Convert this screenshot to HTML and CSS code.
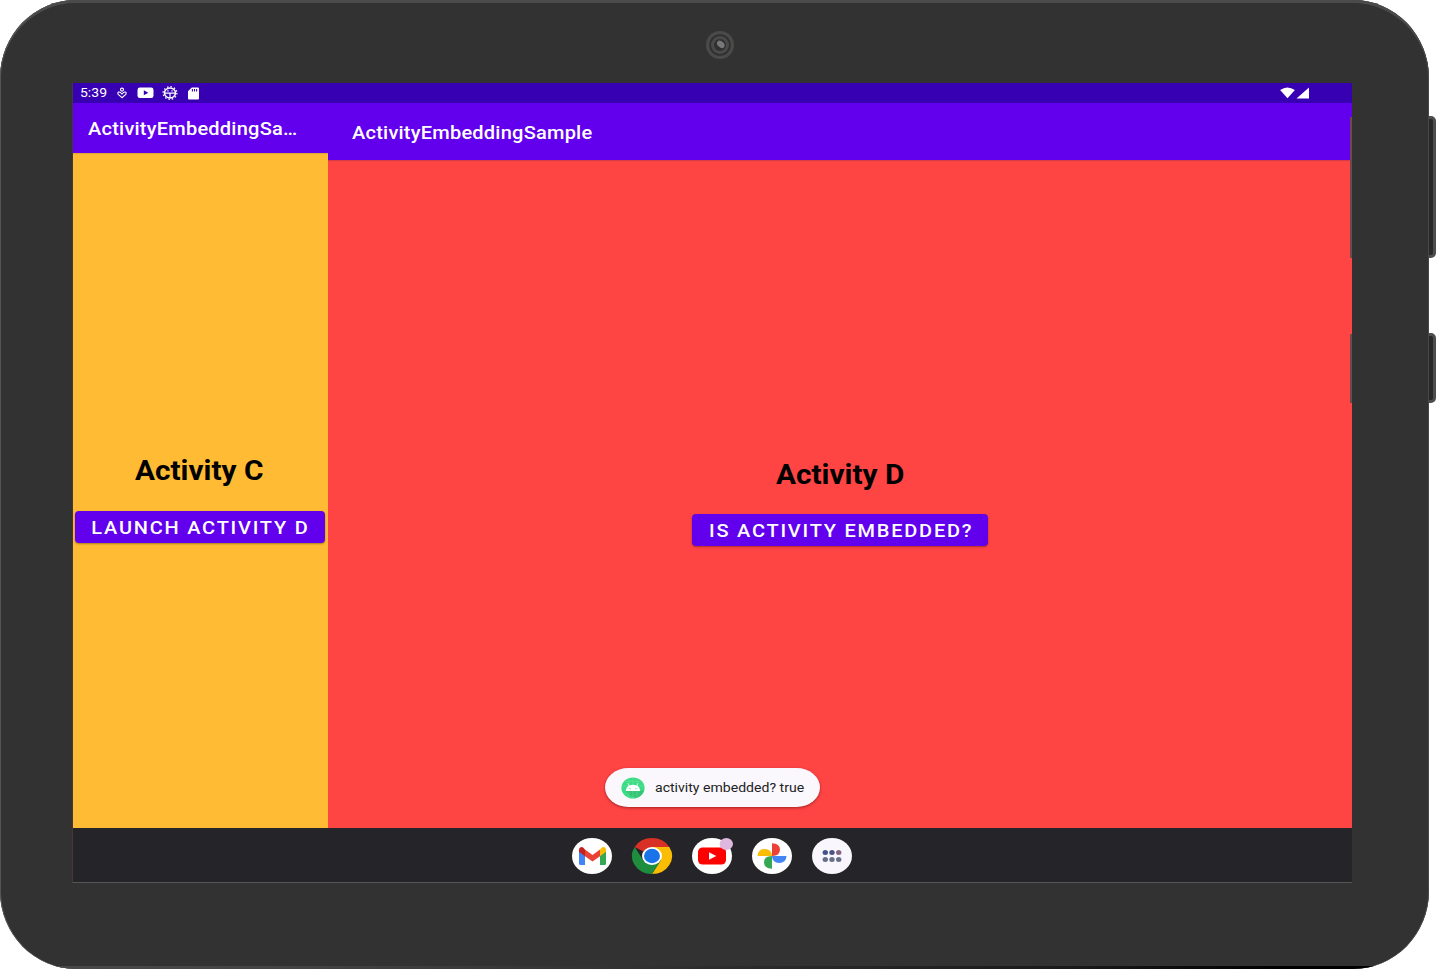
FILE: index.html
```
<!DOCTYPE html>
<html lang="en">
<head>
<meta charset="utf-8">
<title>ActivityEmbeddingSample</title>
<link rel="stylesheet" href="styles.css">
</head>
<body>
<div class="stage">
  <div class="key key-volume"></div>
  <div class="key key-power"></div>
  <div class="device">
    <header class="bezel-top">
      <svg class="camera" width="28" height="28" viewBox="0 0 28 28"><circle cx="14" cy="14" r="14" fill="#4a4a4a"/><circle cx="14" cy="14" r="10.800" fill="#303030"/><circle cx="14" cy="14" r="9" fill="#4a4a4a"/><circle cx="14" cy="14" r="6" fill="#303030"/><ellipse cx="14.800" cy="13.300" rx="4.300" ry="3" transform="rotate(42 14.800 13.300)" fill="#77777b"/></svg>
    </header>
    <main class="screen">
      <div class="status">
        <span class="clock">5:39</span>
        <svg class="s-heart" width="10" height="12" viewBox="0 0 10 12" fill="none" stroke="#fff" stroke-width="1.100"><circle cx="5" cy="2.600" r="1.500"/><path d="M5 10.700 1.200 7.300Q.3 5.800 1.600 5.100 3 4.500 5 7 7 4.500 8.400 5.100 9.700 5.800 8.800 7.300Z"/></svg>
        <svg class="s-tube" width="17" height="12" viewBox="0 0 17 12"><rect x=".5" y=".5" width="16" height="10.600" rx="2.400" fill="#fff"/><path d="M6.800 3.200v5l4.500-2.500z" fill="#3700b3"/></svg>
        <svg class="s-gear" width="16" height="14" viewBox="0 0 16 14" fill="none" stroke="#fff"><ellipse cx="8" cy="7" rx="6.900" ry="6.300" stroke-width="1.300" stroke-dasharray="1.450 2.010"/><ellipse cx="8" cy="7" rx="5.500" ry="4.900" stroke-width="1.500"/><path d="M3 7.100h10M8 7v5M5.300 4.900h1.300M9.400 4.900h1.300" stroke-width="1.200"/></svg>
        <svg class="s-card" width="11" height="13" viewBox="0 0 11 13"><path d="M3.800.5H10q1 0 1 1v10q0 1-1 1H1q-1 0-1-1V4.200z" fill="#fff"/><path d="M4.400 2v2.400M6.500 2v2.400M8.600 2v2.400" stroke="#3700b3" stroke-width="1.100"/></svg>
        <svg class="s-net" width="30" height="12" viewBox="0 0 30 12" fill="#fff"><path d="M.1 3.100Q7.300-2.200 14.900 3.100L7.500 11.300z"/><path d="M29 .4V11.600H16.500z"/></svg>
      </div>
      <div class="panes">
        <section class="pane pane-c">
          <div class="appbar"><span class="title title-c">ActivityEmbeddingSa…</span></div>
          <div class="body">
            <h1 class="heading">Activity C</h1>
            <button class="btn btn-c"><span class="btn-text">LAUNCH ACTIVITY D</span></button>
          </div>
        </section>
        <section class="pane pane-d">
          <div class="appbar"><span class="title title-d">ActivityEmbeddingSample</span></div>
          <div class="body">
            <h1 class="heading">Activity D</h1>
            <button class="btn btn-d"><span class="btn-text">IS ACTIVITY EMBEDDED?</span></button>
          </div>
        </section>
      </div>
      <nav class="taskbar">
        <svg class="app" viewBox="0 0 40 36"><ellipse cx="20" cy="18" rx="20" ry="18" fill="#fff"/><path d="M7 12v13.500q0 1.500 1.500 1.500H13V15.500z" fill="#4285f4"/><path d="M34 12v13.500q0 1.500-1.500 1.500H28V15.500z" fill="#34a853"/><path d="M13 11.500l7.500 5.500 7.500-5.500v6.800L20.500 23.500 13 18.300z" fill="#ea4335"/><path d="M7 12Q7 9 10 9q1.300 0 3 2.500v6.800L7 13.700z" fill="#c5221f"/><path d="M34 12Q34 9 31 9q-1.300 0-3 2.500v6.800l6-4.600z" fill="#fbbc04"/></svg>
        <svg class="app" viewBox="0 0 40 36"><g transform="scale(1.1111 1)"><path d="M18 18 2.410 9A18 18 0 0 1 33.590 9H18z" fill="#d93025"/><path d="M18 9H33.590A18 18 0 0 1 18 36l7.800-13.500z" fill="#fbbc04"/><path d="M2.410 9A18 18 0 0 0 18 36l7.800-13.500L18 18l-7.800 4.500z" fill="#1e8e3e"/><circle cx="18" cy="18" r="9" fill="#fff"/><circle cx="18" cy="18" r="7.200" fill="#1a73e8"/></g></svg>
        <svg class="app" viewBox="0 0 40 36"><ellipse cx="20" cy="18" rx="20" ry="18" fill="#fff"/><rect x="6" y="9.500" width="28" height="17" rx="4.500" fill="#f00"/><path d="M17 14.300v7.400l7.300-3.700z" fill="#fff"/><ellipse cx="34.300" cy="6" rx="6.700" ry="6" fill="#dfb8df"/></svg>
        <svg class="app" viewBox="0 0 40 36"><ellipse cx="20" cy="18" rx="20" ry="18" fill="#fff"/><path d="M20 18V5.300q8 .3 8 6.500T20 18z" fill="#ea4335"/><path d="M20 18H34.500q-.4 7-7.300 7T20 18z" fill="#4285f4"/><path d="M20 18v12.700q-8-.3-8-6.500T20 18z" fill="#34a853"/><path d="M20 18H5.500q.4-7 7.300-7T20 18z" fill="#fbbc04"/></svg>
        <svg class="app" viewBox="0 0 40 36"><ellipse cx="20" cy="18" rx="20" ry="18" fill="#f9f7fd"/><g fill="#676f88"><ellipse cx="13.300" cy="14.500" rx="2.700" ry="2.500" fill="#425488"/><ellipse cx="20" cy="14.500" rx="2.700" ry="2.500" fill="#4b5384"/><ellipse cx="26.700" cy="14.500" rx="2.700" ry="2.500" fill="#866383"/><ellipse cx="13.300" cy="21.600" rx="2.700" ry="2.500"/><ellipse cx="20" cy="21.600" rx="2.700" ry="2.500"/><ellipse cx="26.700" cy="21.600" rx="2.700" ry="2.500"/></g></svg>
      </nav>
    </main>
  </div>
  <div class="toast">
    <svg width="24" height="22" viewBox="0 0 24 22"><ellipse cx="12" cy="11" rx="11.600" ry="10.500" fill="#3ddc84"/><path d="M5 14h14l4-1Q21.500 18.500 16 20.700L9 19z" fill="#36c477"/><path d="M4 4.500h16M1 9h22M8 1v20M16 1v20M12 .5v21" stroke="#72e6a6" stroke-width=".4"/><path d="M4.800 14Q5.300 7.800 12 7.800t7.200 6.200z" fill="#fff"/><path d="M8.500 9.300 6.900 6.300M15.500 9.300l1.600-3" stroke="#fff" stroke-width=".8"/><circle cx="9" cy="11.700" r=".6" fill="#3ddc84"/><circle cx="15" cy="11.700" r=".6" fill="#3ddc84"/></svg>
    <span class="toast-text">activity embedded? true</span>
  </div>
  <div class="edge edge-volume"></div>
  <div class="edge edge-power"></div>
</div>
</body>
</html>
```
FILE: styles.css
```
* { box-sizing: border-box; }
body { margin: 0; background: #fff; font-family: Roboto, "Liberation Sans", sans-serif; }
.stage { position: relative; width: 1436px; height: 969px; overflow: hidden; }
.device {
  position: relative; width: 1429px; height: 969px; padding-left: 72px;
  border-radius: 76px / 78px; background: #323232; overflow: hidden;
  box-shadow: inset 1px 0 #555, inset -1px 0 #484848, inset 0 3px #4b4b4b;
}
.device::after {
  content: ""; position: absolute; left: 0; right: 0; bottom: 0; height: 3px;
  background: linear-gradient(90deg, #4a4a4a 0, #444 20%, #1a1a1a 75%, #000 90%);
}
.bezel-top { height: 83px; padding: 31px 0 0 634px; }
.camera { display: block; }
.key { position: absolute; left: 1424px; width: 11.5px; border: 3px solid #4d4d4d; border-radius: 5px; background: #292929; }
.key-volume { top: 116px; height: 142px; }
.key-power { top: 333px; height: 70px; }
.edge { position: absolute; left: 1350px; width: 2px; background: linear-gradient(90deg, #80404a, #555); }
.edge-volume { top: 117px; height: 141px; }
.edge-power { top: 334px; height: 69px; }
.screen { display: flex; flex-direction: column; width: 1280px; height: 800px; border-bottom: 1px solid #555; border-left: 1px solid #44363a; }
.status { display: flex; height: 20px; align-items: center; background: #3700b3; padding-left: 7px; }
.clock { width: 36px; font-size: 12.5px; line-height: 20px; color: #fff; transform: scaleX(1.12); transform-origin: left; }
.s-heart { margin-left: .5px; }
.s-tube { margin-left: 10.5px; }
.s-gear { margin-left: 8px; }
.s-card { margin-left: 10px; }
.s-net { margin-left: auto; margin-right: 42px; }
.panes { display: flex; height: 725px; }
.pane { display: flex; flex-direction: column; overflow: hidden; }
.pane-c { width: 255px; background: #ffbb33; }
.pane-d { flex: 1; background: #ff4444; }
.appbar { display: flex; align-items: center; background: #6200ee; color: #fff; }
.pane-c .appbar { height: 50px; padding: 2px 0 0 15px; box-shadow: 0 1px 1px #e0a63a; }
.pane-d .appbar { height: 57px; padding: 2px 0 0 24px; box-shadow: 0 1px 1px #d83c46; }
.title { font-size: 18px; font-weight: 500; line-height: 24px; letter-spacing: .2px; white-space: nowrap; transform: scaleX(1.112); transform-origin: left; }
.body { display: flex; flex: 1; flex-direction: column; align-items: center; }
.pane-c .body { padding: 301px 2px 0 0; }
.pane-d .body { padding-top: 298px; }
.heading { margin: 0; font-size: 27px; line-height: 34px; font-weight: 700; color: #000; transform: scaleX(1.103); white-space: nowrap; }
.btn { display: flex; align-items: center; justify-content: center; height: 32px; margin: 22px 0 0; padding: 0; border: 0; border-radius: 4px; background: #6200ee; color: #fff; font-family: inherit; box-shadow: 0 1px 2px rgba(0,0,0,.35); }
.btn-c { width: 250px; margin-top: 22.5px; }
.btn-d { width: 296px; }
.btn-text { padding: 1px 0 0 2px; font-size: 18px; font-weight: 500; letter-spacing: 1.6px; white-space: nowrap; transform: scaleX(1.11); }
.taskbar { display: flex; height: 54px; flex: none; justify-content: center; align-items: center; gap: 20px; padding: 1px 1px 0 0; background: #252429; }
.app { width: 40px; height: 36px; flex: none; overflow: visible; }
.toast { position: absolute; left: 604.5px; top: 768px; display: flex; align-items: center; width: 215px; height: 39px; padding-left: 16px; gap: 10px; border-radius: 24px / 20px; background: #faf8fd; box-shadow: 0 1px 3px rgba(80,0,0,.5); }
.toast-text { padding-top: 1px; font-size: 12.5px; line-height: 20px; color: #222; white-space: nowrap; transform: scaleX(1.125); transform-origin: left; }
```
